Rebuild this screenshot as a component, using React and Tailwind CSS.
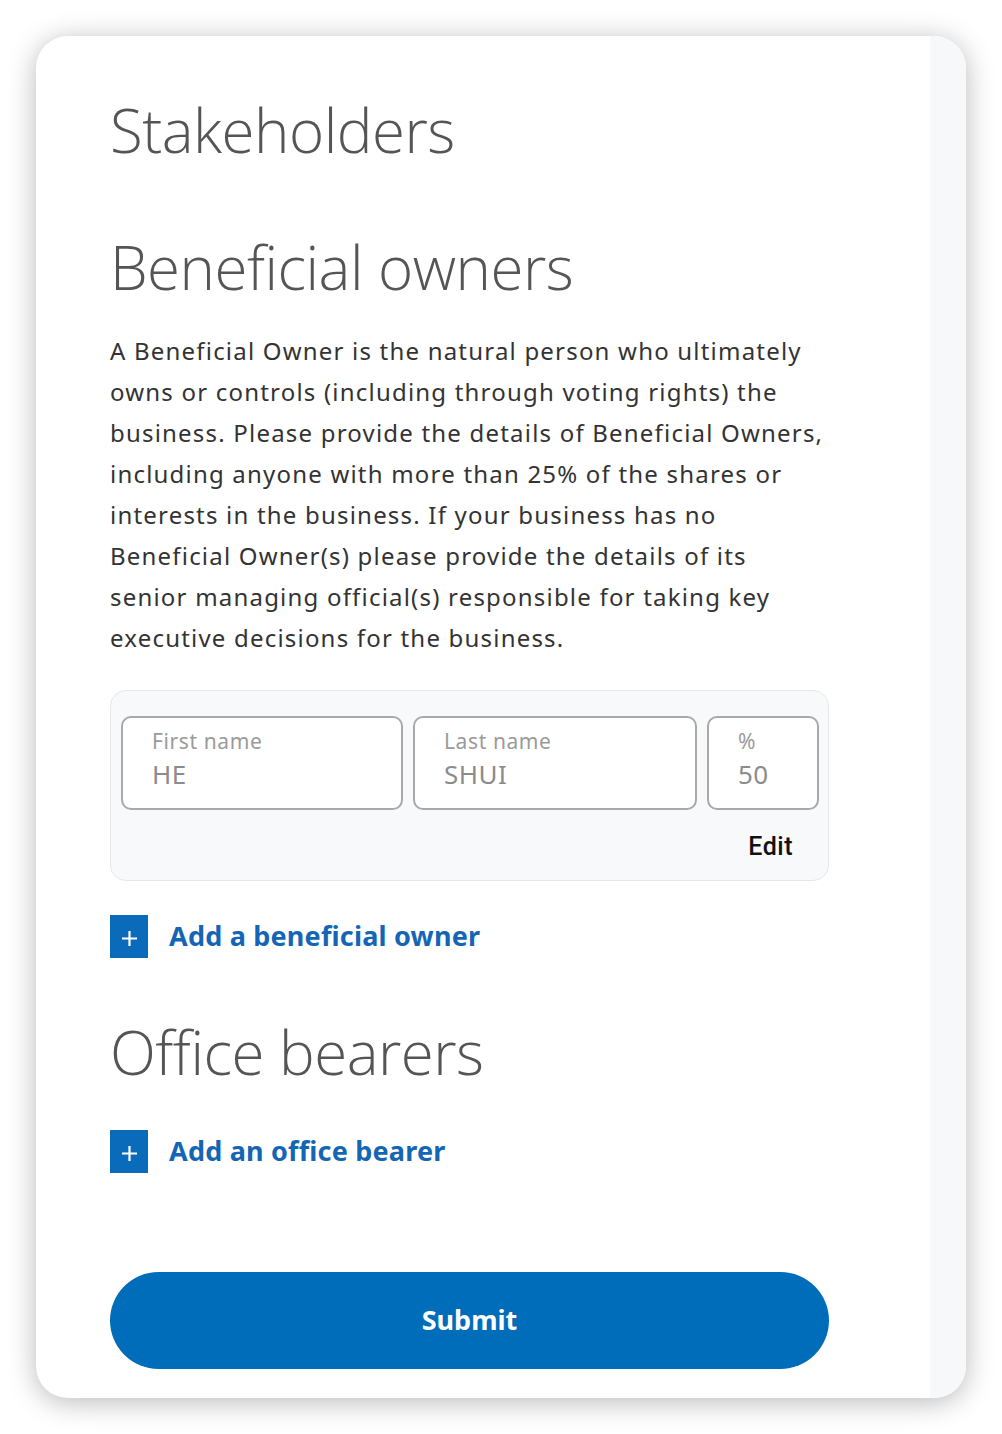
import React from "react";

const FIELDS = [
  { label: "First name", value: "HE" },
  { label: "Last name", value: "SHUI" },
  { label: "%", value: "50" },
];

const AddLink = ({ children }) => (
  <button type="button" className="flex items-center gap-[21px] text-left">
    <span className="flex h-[43px] w-[38px] items-center justify-center bg-[#0a6bbb] pt-[4px]">
      <svg width="17" height="17" viewBox="0 0 17 17" fill="none" stroke="white" strokeWidth="2.2">
        <path d="M8.5 1v15M1 8.5h15" />
      </svg>
    </span>
    <span className="text-[27px] font-bold tracking-[0.2px] text-[#1466b5]">{children}</span>
  </button>
);

const headingFont = { fontFamily: '"Open Sans", sans-serif' };

export default function App() {
  return (
    <div className="min-h-[1434px] bg-white p-[36px]" style={{ fontFamily: '"Noto Sans", "Open Sans", sans-serif' }}>
      <div className="flex h-[1362px] overflow-hidden rounded-[32px] bg-white shadow-[0_4px_28px_rgba(0,0,0,0.28)]">
        <main className="flex-1 pl-[74px]">
          <h1 className="mt-[58px] text-[60px] font-light leading-[72px] tracking-[-0.5px] text-[#555]" style={headingFont}>
            Stakeholders
          </h1>
          <h2 className="mt-[65px] text-[60px] font-light leading-[72px] tracking-[-0.5px] text-[#555]" style={headingFont}>
            Beneficial owners
          </h2>
          <p className="mt-[27px] w-[716px] text-[24px] leading-[41px] tracking-[1.2px] text-[#333]">
            A Beneficial Owner is the natural person who ultimately owns or controls (including through voting rights) the
            business. Please provide the details of Beneficial Owners, including anyone with more than 25% of the shares or
            interests in the business. If your business has no Beneficial Owner(s) please provide the details of its senior
            managing official(s) responsible for taking key executive decisions for the business.
          </p>

          <div className="mt-[32px] w-[719px] rounded-[16px] border border-[#e6e8ea] bg-[#f8f9fa] pb-[17px] pl-[10px] pr-[9px] pt-[25px]">
            <div className="grid grid-cols-[282px_284px_112px] gap-[10px]">
              {FIELDS.map((f) => (
                <div key={f.label} className="h-[94px] rounded-[10px] border-2 border-[#a9a9a9] bg-white px-[29px] pt-[8px]">
                  <div className="text-[21px] leading-[30px] tracking-[0.6px] text-[#9a9a9a]">{f.label}</div>
                  <div className="text-[26px] leading-[36px] tracking-[0.5px] text-[#8c8c8c]">{f.value}</div>
                </div>
              ))}
            </div>
            <div className="mt-[21px] flex justify-end pr-[26px]">
              <button
                type="button"
                className="text-[25px] font-medium leading-[32px] tracking-[0.5px] text-[#111]"
                style={{ fontFamily: '"Roboto", sans-serif' }}
              >
                Edit
              </button>
            </div>
          </div>

          <div className="mt-[34px]">
            <AddLink>Add a beneficial owner</AddLink>
          </div>

          <h2 className="mt-[58px] text-[60px] font-light leading-[72px] tracking-[-0.5px] text-[#555]" style={headingFont}>
            Office bearers
          </h2>

          <div className="mt-[42px]">
            <AddLink>Add an office bearer</AddLink>
          </div>

          <button
            type="button"
            className="mt-[99px] flex h-[97px] w-[719px] items-center justify-center rounded-full bg-[#006dba] text-[27px] font-bold text-white"
          >
            Submit
          </button>
        </main>
        <aside className="w-[36px] bg-[#f7f8fa]" />
      </div>
    </div>
  );
}
